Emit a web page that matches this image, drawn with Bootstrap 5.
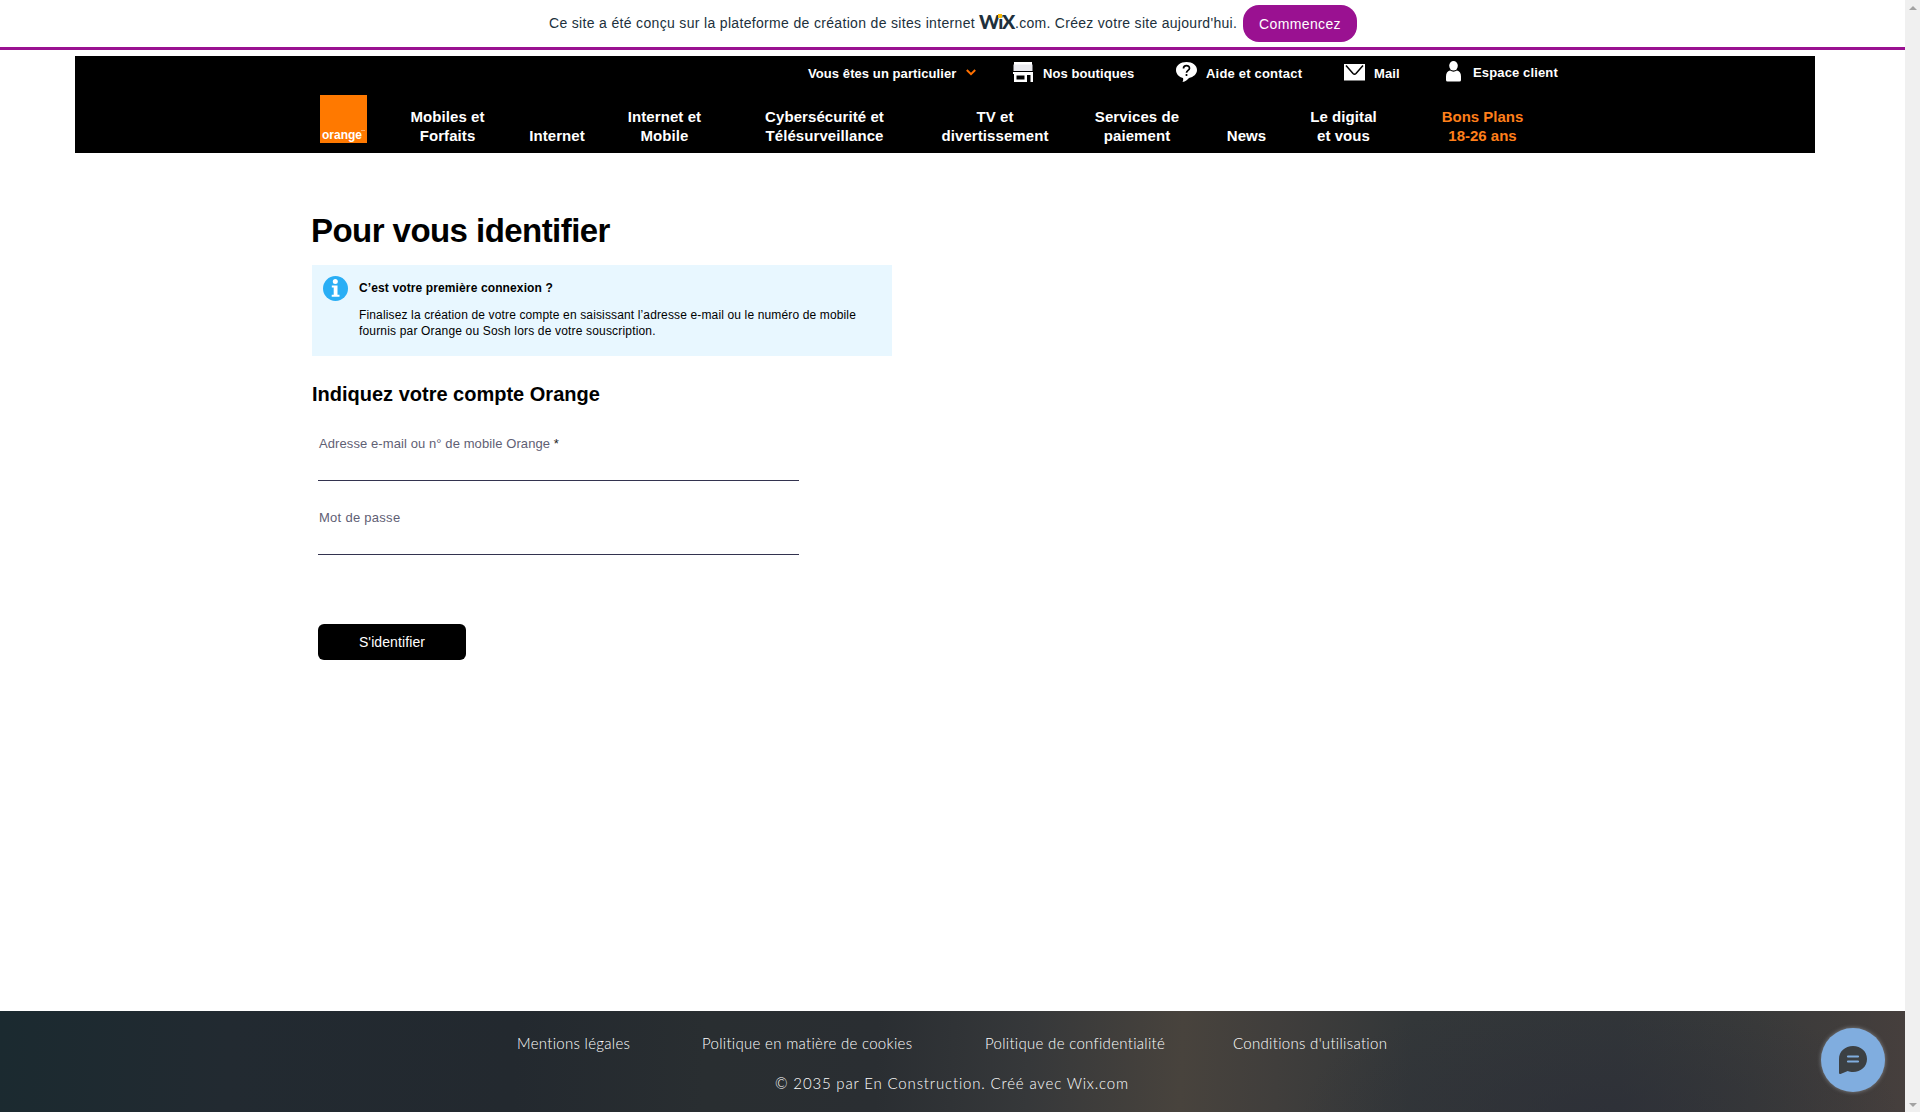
<!DOCTYPE html>
<html lang="fr">
<head>
<meta charset="utf-8">
<meta name="viewport" content="width=device-width, initial-scale=1">
<title>Pour vous identifier</title>
<link href="https://cdn.jsdelivr.net/npm/bootstrap@5.3.0/dist/css/bootstrap.min.css" rel="stylesheet">
<style>
body{font-family:"Liberation Sans",Arial,sans-serif;color:#000;background:#fff;height:1112px;overflow:hidden}
svg{display:block;flex:none}
a{color:inherit;text-decoration:none}

/* scrollbar column */
.scroll-rail{width:15px;background:#f0f0f0;padding:6px 0 5px}

/* Wix promotion bar */
.wix-bar{height:50px;border-bottom:3px solid #9a1191;color:#20303c;font-size:14px;line-height:20px;padding-left:549px}
.wix-lead{letter-spacing:.33px;padding-top:13px;width:427px}
.wix-tail{letter-spacing:.29px;padding-top:13px;width:221px}
.wix-logo{width:39px;padding:11px 0 0 3px;font:900 19.5px/22px Lato,sans-serif;letter-spacing:-1.3px}
.wix-dot{width:4px;height:4px;left:22px;top:14px;background:#fbbd0b}
.btn-start{width:114px;height:37px;border-radius:16px;background:#9a1191;color:#fff;font-size:14px;line-height:20px;letter-spacing:.38px;margin:5px 0 0 7px;padding:9px 0 0}

/* black site header */
.site-head{margin:6px 90px 0 75px;height:97px;background:#000;color:#fff;font-weight:700}
.util{padding-left:733px;height:33px;font-size:13px;line-height:35px;letter-spacing:.08px}
.u-part{width:205px}
.u-shop{width:163px}
.u-help{width:168px}
.u-help .u-label{letter-spacing:.2px}
.u-mail{width:102px}
.u-icon{width:30px}
.u-mail + .u-item .u-icon{width:27px}
.u-mail + .u-item .u-label{line-height:33px;letter-spacing:.14px}
.u-chevron{margin:13px 0 0 10px}
.main-nav{padding-left:245px;font-size:15px;line-height:19px;letter-spacing:.08px}
.nav-grid{display:grid;grid-template-columns:95px 124px 91px 229px 112px 172px 47px 147px 131px;align-items:end;text-align:center;margin-left:33px;height:56px}
.orange-box{width:47px;height:48px;background:#ff7900;margin-top:6px;font-size:12px;line-height:12px;letter-spacing:0;padding:34px 0 0 2px}
.orange-tm{width:4px;height:1px;right:2px;top:35px;background:#ffb26b}
.c-plan{color:#ff7f1a;letter-spacing:0}

/* login column */
.page-col{padding-left:312px}
.page-title{font-size:33px;line-height:38px;font-weight:700;letter-spacing:-.55px;margin:59px 0 0 -1px}
.info-box{width:580px;height:91px;background:#e8f7ff;margin-top:15px;padding:11px 0 0 11px;font-size:12px;line-height:17px;gap:11px;letter-spacing:.14px}
.info-head{padding-top:4px;margin-bottom:10px;letter-spacing:.12px}
.info-more{letter-spacing:.17px;line-height:15px}
.sub-title{font-size:20px;line-height:24px;font-weight:700;margin:26px 0 30px}
.field-label{font-size:13px;line-height:16px;color:#5f6074;letter-spacing:.09px;margin:0 0 0 7px;display:block}
.field-label.is-pass{letter-spacing:.28px;margin-top:29px}
.field-star{color:#222}
.line-field,.line-field:focus{width:481px;height:29px;margin-left:6px;border:0;border-bottom:1px solid #33334f;border-radius:0;padding:0;background:none;box-shadow:none}
.btn-id{width:148px;height:36px;background:#000;color:#fff;border-radius:6px;font-size:14px;line-height:34px;letter-spacing:.1px;padding:0;border:0;margin:69px 0 0 6px}

/* footer */
.foot{height:101px;color:#fff;font-family:Lato,sans-serif;font-weight:300;font-size:15px;line-height:20px;background:radial-gradient(ellipse 300px 120px at 1600px 100%,rgba(43,45,55,.6),transparent),linear-gradient(92deg,#1b2a30 0,#222a31 12%,#23292f 27%,#292e31 37%,#2a2e32 46%,#36383a 54%,#48433d 62%,#403e3c 67%,#333739 74%,#323639 85%,#393a3a 92%,#463f3d 100%)}
.foot-links{padding:22px 0 0 517px;letter-spacing:.3px}
.f-legal{width:185px}
.f-cookies{width:283px}
.f-priv{width:248px}
.foot-copy{padding:20px 0 0 775px;letter-spacing:.83px}
.chat{right:20px;bottom:20px;width:64px;height:64px;background:#80addf;box-shadow:0 0 4px rgba(200,210,220,.5)}
</style>
</head>
<body class="d-flex">
<div class="flex-grow-1 d-flex flex-column position-relative">
  <div class="wix-bar d-flex text-nowrap">
    <span class="wix-lead">Ce site a été conçu sur la plateforme de création de sites internet</span>
    <span class="wix-logo position-relative">WiX<i class="wix-dot position-absolute"></i></span>
    <span class="wix-tail">.com. Créez votre site aujourd'hui.</span>
    <a class="btn-start text-center" href="#">Commencez</a>
  </div>

  <header class="site-head">
    <div class="util d-flex text-nowrap">
      <a class="u-part d-flex" href="#">Vous êtes un particulier
        <svg class="u-chevron" width="10" height="7" viewBox="0 0 10 7" fill="none" stroke="#ff7000" stroke-width="2"><path d="M.8 1 5 5.200 9.200 1"/></svg></a>
      <a class="u-shop d-flex" href="#"><span class="u-icon"><svg class="mt-1" width="20" height="24" viewBox="0 0 20 24" fill="#fff"><path d="M1 2h18v3H1z"/><path d="M.5 4.500h19V11H.5z" fill="#e9e9ee"/><path d="M0 12h20v10h-2.500v-7H14v7H1v-8H0z"/><path d="M3.500 15.500h8v4h-8z" fill="#000"/></svg></span><span>Nos boutiques</span></a>
      <a class="u-help d-flex" href="#"><span class="u-icon"><svg class="mt-1" width="21" height="24" viewBox="0 0 21 24"><path fill="#fff" d="M10.500 2C16.500 2 21 5.500 21 10c0 4-3.500 7-8 8-1.500 1.800-3.500 3.500-6.500 4 .8-1.300.9-2.600.5-4C3 17 0 14 0 10c0-4.500 4.500-8 10.500-8z"/><path fill="none" stroke="#000" stroke-width="1.700" d="M7.500 8.500c0-3.800 6-3.700 6-.3 0 2.200-3 2.200-3 4.600M10.500 14v2"/></svg></span><span class="u-label">Aide et contact</span></a>
      <a class="u-mail d-flex" href="#"><span class="u-icon"><svg class="mt-1" width="21" height="24" viewBox="0 0 21 24"><path fill="#fff" d="M0 4h21v16.500H0z"/><path fill="none" stroke="#000" stroke-width="1.500" d="m2 5.500 7 8q1.500 1.500 3 0l7-8"/></svg></span><span>Mail</span></a>
      <a class="u-item d-flex" href="#"><span class="u-icon"><svg class="mt-1" width="15" height="24" viewBox="0 0 15 24" fill="#fff"><ellipse cx="7.500" cy="5.800" rx="4.300" ry="4.800"/><path d="M4 10.500q3.500 2.300 7 0 4 .8 4 6V20q0 1.500-1.500 1.500h-12Q0 21.500 0 20v-3.500q0-5.200 4-6z"/></svg></span><span class="u-label">Espace client</span></a>
    </div>
    <nav class="main-nav d-flex text-nowrap">
      <a class="orange-box position-relative" href="#">orange<i class="orange-tm position-absolute"></i></a>
      <div class="nav-grid">
        <a href="#">Mobiles et<br>Forfaits</a>
        <a href="#">Internet</a>
        <a href="#">Internet et<br>Mobile</a>
        <a href="#">Cybersécurité et<br>Télésurveillance</a>
        <a href="#">TV et<br>divertissement</a>
        <a href="#">Services de<br>paiement</a>
        <a href="#">News</a>
        <a href="#">Le digital<br>et vous</a>
        <a class="c-plan" href="#">Bons Plans<br>18-26 ans</a>
      </div>
    </nav>
  </header>

  <main class="page-col">
    <h1 class="page-title">Pour vous identifier</h1>
    <div class="info-box d-flex">
      <svg width="25" height="25" viewBox="0 0 25 25"><circle cx="12.500" cy="12.500" r="12.500" fill="#29aef5"/><g fill="#fff"><circle cx="12.300" cy="5.600" r="2.500"/><path d="M8.800 9.500h5.700v9.300h2v1.900H8.700v-1.900h2v-7.400H8.800z"/></g></svg>
      <div class="text-nowrap">
        <div class="info-head fw-bold">C’est votre première connexion ?</div>
        <div>Finalisez la création de votre compte en saisissant l’adresse e-mail ou le numéro de mobile</div>
        <div class="info-more">fournis par Orange ou Sosh lors de votre souscription.</div>
      </div>
    </div>
    <h2 class="sub-title">Indiquez votre compte Orange</h2>
    <form>
      <label class="field-label" for="mail">Adresse e-mail ou n° de mobile Orange <span class="field-star">*</span></label>
      <input class="form-control line-field" id="mail" type="email">
      <label class="field-label is-pass" for="pass">Mot de passe</label>
      <input class="form-control line-field" id="pass" type="password">
      <button class="btn btn-id" type="button">S'identifier</button>
    </form>
  </main>

  <footer class="foot mt-auto text-nowrap">
    <div class="foot-links d-flex">
      <a class="f-legal" href="#">Mentions légales</a>
      <a class="f-cookies" href="#">Politique en matière de cookies</a>
      <a class="f-priv" href="#">Politique de confidentialité</a>
      <a href="#">Conditions d'utilisation</a>
    </div>
    <div class="foot-copy">© 2035 par En Construction. Créé avec Wix.com</div>
  </footer>
  <a class="chat rounded-circle position-absolute d-flex align-items-center justify-content-center" href="#">
    <svg width="28" height="28" viewBox="0 0 28 28"><path fill="#3c4043" d="M14 0c8 0 14 5.500 14 13s-6 13-14 13c-2 0-3.600-.3-5.200-1L1.500 28Q0 28.300 0 26.800V13C0 5.500 6 0 14 0z"/><path stroke="#80addf" stroke-width="2.200" stroke-linecap="round" d="M9 10.500h10M9 15.500h10"/></svg>
  </a>
</div>
<aside class="scroll-rail d-flex flex-column justify-content-between align-items-center">
  <svg width="8" height="4" viewBox="0 0 8 4"><path fill="#a3a3a3" d="M0 4 4 0l4 4z"/></svg>
  <svg width="8" height="4" viewBox="0 0 8 4"><path fill="#a3a3a3" d="m0 0 4 4 4-4z"/></svg>
</aside>
<script src="https://cdn.jsdelivr.net/npm/bootstrap@5.3.0/dist/js/bootstrap.bundle.min.js"></script>
</body>
</html>
